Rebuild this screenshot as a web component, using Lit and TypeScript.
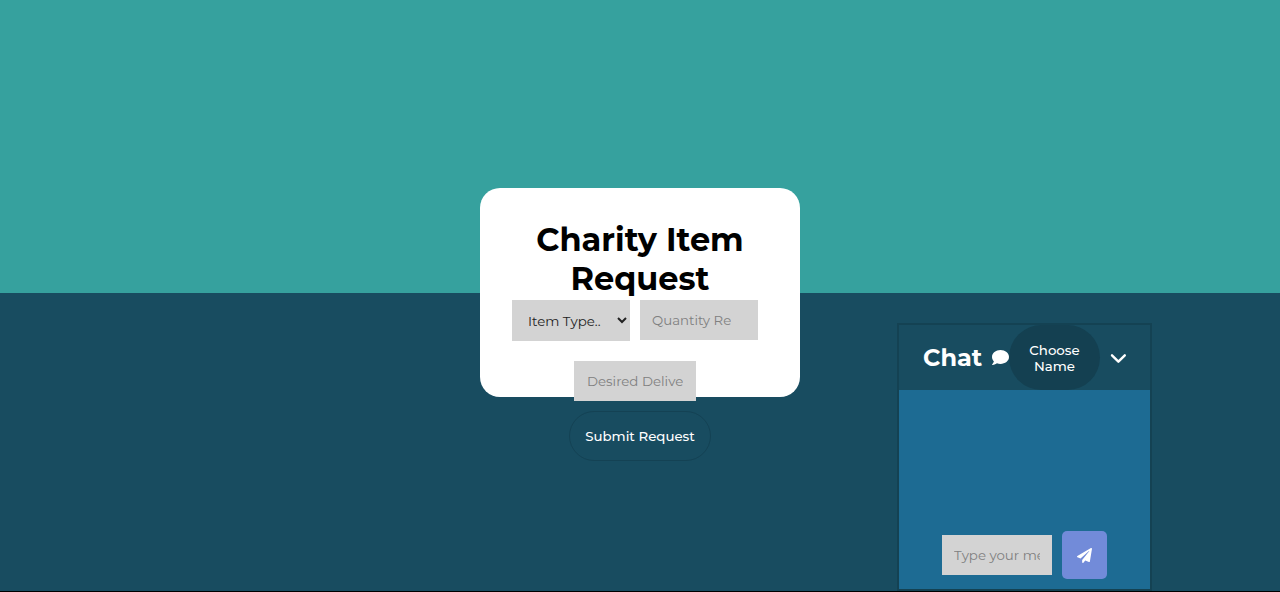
import { LitElement, html, css } from "lit";
import { customElement, state } from "lit/decorators.js";

const controls = css`
  * {
    box-sizing: border-box;
    font-family: Montserrat, Inter, "Open Sans", sans-serif;
  }
  input,
  select {
    height: 40px;
    margin: 0;
    border: 0;
    border-radius: 0;
    padding: 0 12px;
    background: #d3d3d3;
    color: #222;
  }
  input::placeholder {
    color: #808080;
    opacity: 1;
  }
  button {
    margin: 0;
    padding: 0;
    border: 0;
    color: #fff;
    font-weight: 500;
    cursor: pointer;
  }
`;

@customElement("request-card")
export class RequestCard extends LitElement {
  static styles = [
    controls,
    css`
      :host {
        display: block;
        width: 25%;
        min-width: 320px;
        height: 209px;
      }
      .card {
        height: 100%;
        box-sizing: border-box;
        padding: 32px;
        border-radius: 20px;
        background: #fff;
      }
      h1 {
        margin: 0;
        color: #000;
        font-size: 32px;
        line-height: 39px;
        font-weight: 700;
        text-align: center;
      }
      form {
        display: flex;
        flex-direction: column;
        align-items: center;
        padding-top: 2px;
      }
      .row {
        display: flex;
        align-items: flex-start;
        gap: 10px;
        padding-right: 10px;
        margin-bottom: 20px;
      }
      .row.last {
        margin-bottom: 10px;
      }
      .half {
        width: 118px;
      }
      select.half {
        height: 41px;
      }
      .date {
        width: 122px;
        padding: 0 13px;
      }
      .submit {
        height: 50px;
        padding: 0 15px;
        border: 1px solid #144254;
        border-radius: 25px;
        background: #184c60;
      }
    `,
  ];

  render() {
    return html`
      <section class="card">
        <h1>Charity Item Request</h1>
        <form @submit=${(e: Event) => e.preventDefault()}>
          <div class="row">
            <select class="half" aria-label="Item type">
              <option>Item Type..</option>
              <option>Food</option>
              <option>Clothes</option>
            </select>
            <input class="half" type="number" aria-label="Quantity required" placeholder="Quantity Required" />
          </div>
          <div class="row last">
            <input class="date" type="text" aria-label="Desired delivery date" placeholder="Desired Delivery Date" />
          </div>
          <button class="submit" type="submit">Submit Request</button>
        </form>
      </section>
    `;
  }
}

@customElement("chat-box")
export class ChatBox extends LitElement {
  @state() private open = true;

  static styles = [
    controls,
    css`
      :host {
        display: block;
      }
      .box {
        border: 2px solid #144253;
        background: #1d6b93;
      }
      header {
        display: flex;
        align-items: center;
        height: 65px;
        padding-left: 24px;
        background: #184c60;
        color: #fff;
      }
      h2 {
        flex: none;
        width: 69px;
        margin: 0;
        font-size: 24px;
        line-height: 30px;
        font-weight: 700;
      }
      svg {
        display: block;
        flex: none;
      }
      .name {
        width: 91px;
        height: 65px;
        padding: 0 16px;
        border-radius: 33px;
        background: #144051;
        line-height: 16px;
      }
      .toggle {
        margin-left: 10px;
        background: none;
      }
      .body {
        display: flex;
        flex-direction: column;
        justify-content: flex-end;
        height: 199px;
        padding-bottom: 10px;
      }
      form {
        display: flex;
        align-items: center;
        justify-content: center;
        gap: 10px;
      }
      .message {
        width: 110px;
      }
      .send {
        display: flex;
        align-items: center;
        justify-content: center;
        width: 45px;
        height: 48px;
        border-radius: 5px;
        background: #728bd9;
      }
    `,
  ];

  render() {
    return html`
      <section class="box">
        <header>
          <h2>Chat</h2>
          <svg width="17" height="17" viewBox="0 0 512 512" fill="currentColor" aria-hidden="true">
            <path d="M256 32C114.600 32 0 125.100 0 240c0 49.600 21.400 95 57 130.700C44.500 421.100 2.700 466 2.200 466.500c-2.200 2.300-2.800 5.700-1.500 8.700S4.800 480 8 480c66.300 0 116-31.800 140.600-51.400 32.700 12.300 69 19.400 107.400 19.400 141.400 0 256-93.100 256-208S397.400 32 256 32z" />
          </svg>
          <button class="name" type="button">Choose Name</button>
          <button class="toggle" type="button" aria-label="Toggle chat" @click=${() => (this.open = !this.open)}>
            <svg width="17" height="17" viewBox="0 0 17 17" fill="none" stroke="#fff" stroke-width="2.400" stroke-linecap="round" stroke-linejoin="round">
              <path d="M2 6.300 8.400 12.700 14.800 6.300" />
            </svg>
          </button>
        </header>
        ${this.open
          ? html`<div class="body">
              <form @submit=${(e: Event) => e.preventDefault()}>
                <input class="message" type="text" aria-label="Message" placeholder="Type your message.." />
                <button class="send" type="submit" aria-label="Send message">
                  <svg width="15" height="15" viewBox="0 0 512 512" fill="#fff">
                    <path d="M476 3.200 12.500 270.600c-18.100 10.400-15.800 35.600 2.200 43.200L121 358.400l287.300-253.200c5.500-4.900 13.300 2.600 8.600 8.300L176 407v80.500c0 23.600 28.500 32.900 42.500 15.800L282 426l124.600 52.200c14.200 6 30.400-2.900 33-18.200l72-432C515 7.800 493.300-6.800 476 3.200z" />
                  </svg>
                </button>
              </form>
            </div>`
          : null}
      </section>
    `;
  }
}

@customElement("app-root")
export class AppRoot extends LitElement {
  static styles = css`
    :host {
      display: block;
    }
    .page {
      position: relative;
      box-sizing: border-box;
      display: flex;
      align-items: center;
      justify-content: center;
      min-height: 100vh;
      padding-bottom: 6px;
      border-bottom: 1px solid #000;
      background: linear-gradient(#36a19e 293px, #184c60 293px);
    }
    .chat {
      position: absolute;
      right: 10%;
      bottom: 0;
      width: 255px;
    }
  `;

  render() {
    return html`
      <main class="page">
        <request-card></request-card>
        <chat-box class="chat"></chat-box>
      </main>
    `;
  }
}
